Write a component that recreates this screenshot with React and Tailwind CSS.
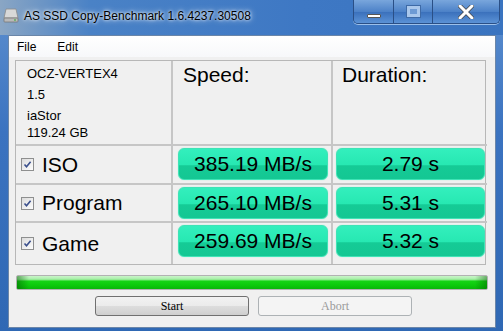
import React from "react";

const rows = [
  { name: "ISO", speed: "385.19 MB/s", time: "2.79 s" },
  { name: "Program", speed: "265.10 MB/s", time: "5.31 s" },
  { name: "Game", speed: "259.69 MB/s", time: "5.32 s" },
];

function DriveIcon() {
  return (
    <svg width="16" height="16" viewBox="0 0 16 16">
      <path d="M3 2h10l2 9H1z" fill="#d8d8d8" stroke="#8a8a8a" strokeWidth="0.8" />
      <rect x="1" y="11" width="14" height="4" rx="0.8" fill="#b9b9b9" stroke="#777" strokeWidth="0.8" />
      <rect x="11" y="12.5" width="2" height="1" fill="#3a3" />
    </svg>
  );
}

function Check() {
  return (
    <div className="w-[13px] h-[13px] border border-[#8e8f8f] bg-gradient-to-br from-[#dcdcdc] to-[#fdfdfd] flex items-center justify-center">
      <svg width="9" height="9" viewBox="0 0 9 9">
        <path d="M1.5 4.5l2 2.2L7.6 1.8" fill="none" stroke="#3a4f8c" strokeWidth="1.6" />
      </svg>
    </div>
  );
}

function Green({ children }) {
  return (
    <div className="h-[32px] rounded-[6px] border border-[#3fe3b6] flex items-center justify-center text-[21px] text-black bg-[linear-gradient(to_bottom,#33efbd_0%,#27e8b2_52%,#15cb96_56%,#14c793_100%)] shadow-[0_0_1px_#6ef0cc]">
      {children}
    </div>
  );
}

export default function App() {
  return (
    <div
      className="w-[503px] h-[331px] overflow-hidden flex flex-col bg-[linear-gradient(to_bottom,#5d8fcf,#3b73c0_40%,#2f68b4)]"
      style={{ fontFamily: '"Liberation Sans", Arial, sans-serif' }}
    >
      {/* title bar */}
      <div className="h-[35px] flex items-start shrink-0 bg-[linear-gradient(to_right,#8aa6c4,#4a82c6_18%,#3e78c4_60%,#3a74c0)]">
        <div className="mt-[7px] ml-[3px]">
          <DriveIcon />
        </div>
        <div className="ml-[5px] mt-[7px] text-[12px] text-black [text-shadow:0_0_6px_#fff,0_0_3px_#fff]">
          AS SSD Copy-Benchmark 1.6.4237.30508
        </div>
        <div className="ml-auto mr-[3px] flex h-[24px] rounded-b-[5px] border border-t-0 border-[#2a4f86] overflow-hidden shadow-[0_1px_0_#9cc0ea]">
          <div className="w-[40px] flex items-center justify-center border-r border-[#2a4f86] bg-[linear-gradient(to_bottom,#79a6dc,#4d82c8_50%,#3a70bb_52%,#5b92d6)]">
            <div className="w-[14px] h-[4px] mt-[8px] bg-white border border-[#555] rounded-[1px]" />
          </div>
          <div className="w-[39px] flex items-center justify-center border-r border-[#2a4f86] bg-[linear-gradient(to_bottom,#79a6dc,#4d82c8_50%,#3a70bb_52%,#5b92d6)]">
            <div className="w-[13px] h-[11px] border-[3px] border-[#a9c7ec] bg-[#6d9ad4] shadow-[0_0_0_1px_#3e6aa6]" />
          </div>
          <div className="w-[66px] flex items-center justify-center bg-[linear-gradient(to_bottom,#79a6dc,#4d82c8_50%,#3a70bb_52%,#5b92d6)]">
            <svg width="16" height="14" viewBox="0 0 16 14">
              <path d="M2 1l12 12M14 1L2 13" stroke="#444" strokeWidth="4.4" strokeLinecap="round" />
              <path d="M2 1l12 12M14 1L2 13" stroke="#fff" strokeWidth="3" strokeLinecap="round" />
            </svg>
          </div>
        </div>
      </div>

      {/* client area */}
      <div className="ml-[8px] mr-[7px] h-[293px] bg-[#f0f0f0] border border-[#6b86a8] flex flex-col">
        <div className="h-[21px] bg-[linear-gradient(to_bottom,#ffffff,#f7f8fa)] flex items-center text-[12px] text-black shrink-0">
          <span className="ml-[8px]">File</span>
          <span className="ml-[21px]">Edit</span>
        </div>

        <div className="ml-[6px] mt-[3px] w-[471px] grid grid-cols-[157px_160px_154px] grid-rows-[85px_39px_38px_41px] border border-[#b7b7b7]">
          <div className="border-r-2 border-b-2 border-[#c6c6c6] pl-[11px] pt-[5px] text-[13px] text-black leading-[16px]">
            <div>OCZ-VERTEX4</div>
            <div className="mt-[5px]">1.5</div>
            <div className="mt-[5px]">iaStor</div>
            <div className="mt-[1px]">119.24 GB</div>
          </div>
          <div className="border-r-2 border-b-2 border-[#c6c6c6] pl-[10px] pt-[2px] text-[21px] leading-[24px] text-black">
            Speed:
          </div>
          <div className="border-b-2 border-[#c6c6c6] pl-[9px] pt-[2px] text-[21px] leading-[24px] text-black">
            Duration:
          </div>

          {rows.map((r, i) => (
            <React.Fragment key={r.name}>
              <div
                className={`border-r-2 border-[#c6c6c6] flex items-center pl-[5px] gap-[8px] text-[21px] text-black ${
                  i < 2 ? "border-b-2" : ""
                }`}
              >
                <Check />
                <span>{r.name}</span>
              </div>
              <div
                className={`border-r-2 border-[#c6c6c6] pl-[5px] pr-[3px] pt-[2px] ${
                  i < 2 ? "border-b-2" : ""
                }`}
              >
                <Green>{r.speed}</Green>
              </div>
              <div className={`border-[#c6c6c6] pl-[3px] pr-[2px] pt-[2px] ${i < 2 ? "border-b-2" : ""}`}>
                <Green>{r.time}</Green>
              </div>
            </React.Fragment>
          ))}
        </div>

        <div className="ml-[7px] mt-[10px] w-[472px] h-[15px] rounded-[2px] border border-[#b2b2b2] bg-[linear-gradient(to_bottom,#c9f5c9_0%,#a6eea6_25%,#15d415_40%,#0bc80b_75%,#0ab50a_100%)] relative overflow-hidden">
          <div className="absolute left-0 top-0 bottom-0 w-[12px] bg-[linear-gradient(to_right,rgba(0,90,0,0.5),transparent)]" />
          <div className="absolute right-0 top-0 bottom-0 w-[12px] bg-[linear-gradient(to_left,rgba(0,90,0,0.45),transparent)]" />
        </div>

        <div
          className="mt-[6px] ml-[86px] flex gap-[9px]"
          style={{ fontFamily: '"Liberation Serif", "Times New Roman", serif' }}
        >
          <div className="w-[154px] h-[20px] rounded-[3px] border border-[#707070] bg-[linear-gradient(to_bottom,#f2f2f2,#ebebeb_50%,#dddddd_52%,#cfcfcf)] flex items-center justify-center text-[12px] text-black">
            Start
          </div>
          <div className="w-[154px] h-[20px] rounded-[3px] border border-[#adb2b5] bg-[#f4f4f4] flex items-center justify-center text-[12px] text-[#9a9a9a]">
            Abort
          </div>
        </div>
      </div>
    </div>
  );
}
